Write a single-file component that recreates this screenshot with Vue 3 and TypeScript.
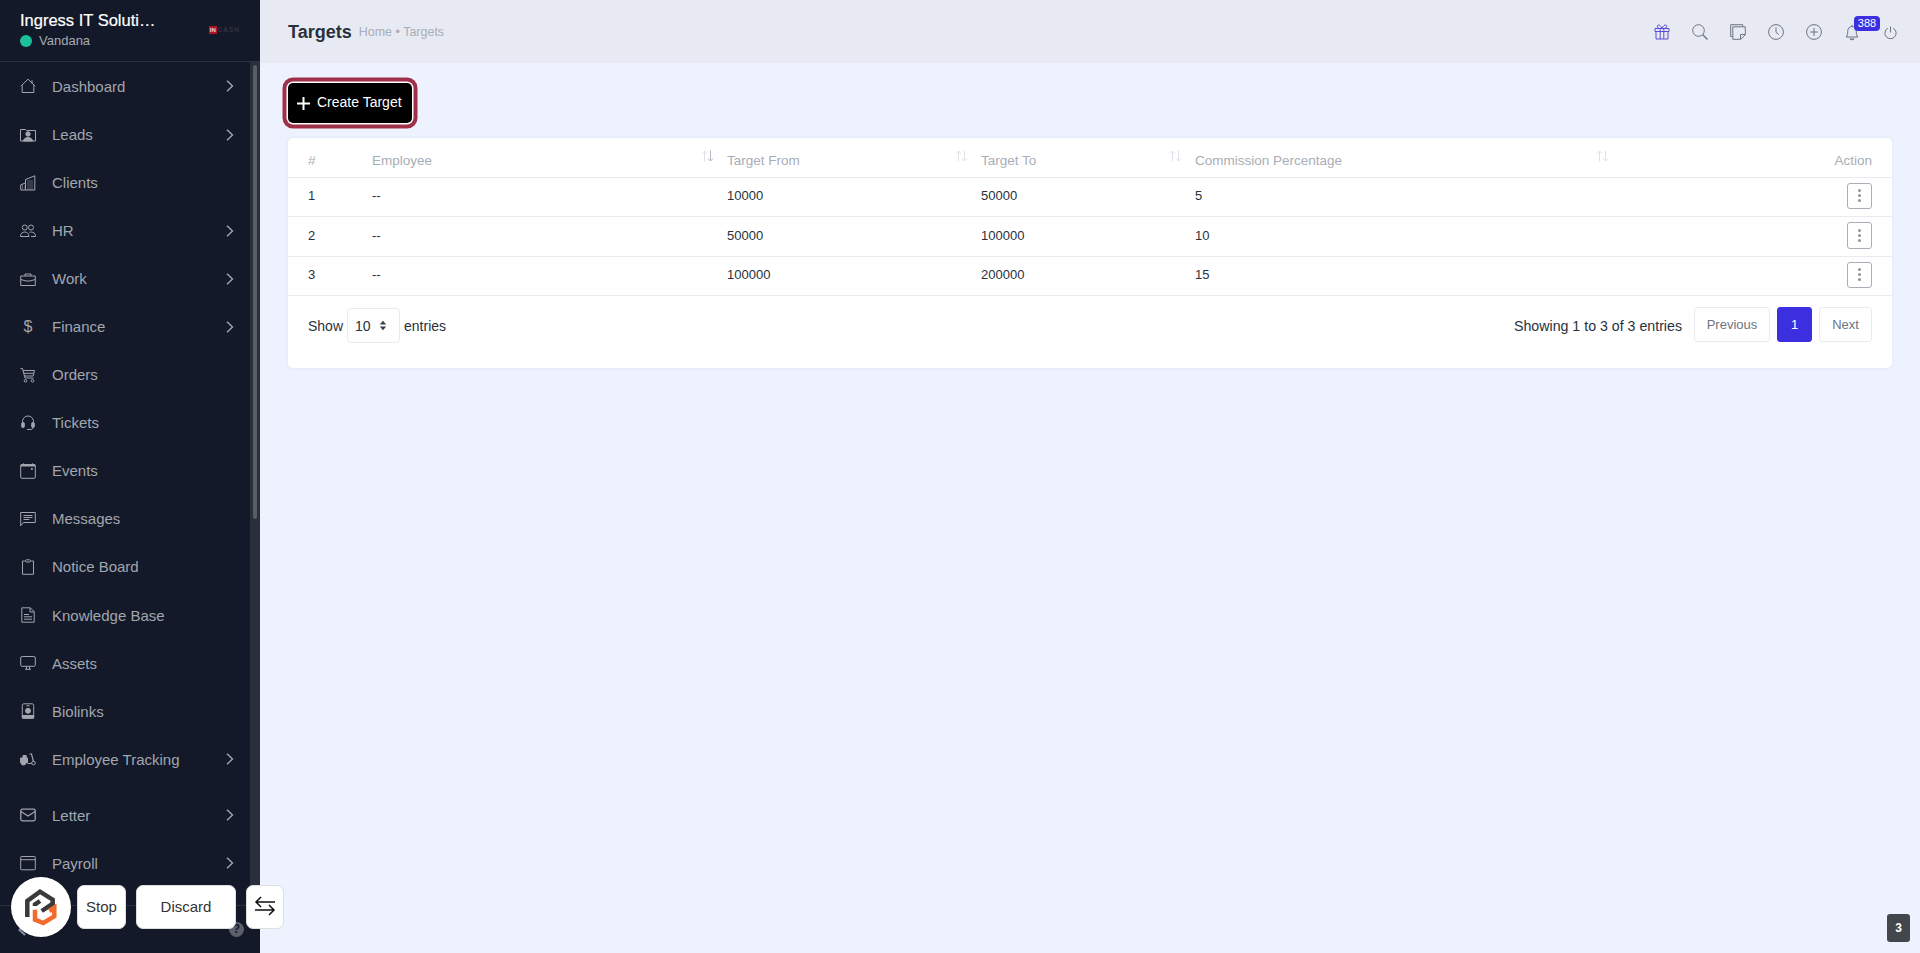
<script setup lang="ts">
interface NavItem { label: string; icon: string; arrow?: boolean; gap?: boolean }
const nav: NavItem[] = [
  { label: 'Dashboard', icon: 'house', arrow: true },
  { label: 'Leads', icon: 'lead', arrow: true },
  { label: 'Clients', icon: 'building' },
  { label: 'HR', icon: 'people', arrow: true },
  { label: 'Work', icon: 'brief', arrow: true },
  { label: 'Finance', icon: 'dollar', arrow: true },
  { label: 'Orders', icon: 'cart' },
  { label: 'Tickets', icon: 'headset' },
  { label: 'Events', icon: 'cal' },
  { label: 'Messages', icon: 'chat' },
  { label: 'Notice Board', icon: 'clip' },
  { label: 'Knowledge Base', icon: 'file' },
  { label: 'Assets', icon: 'display' },
  { label: 'Biolinks', icon: 'badge' },
  { label: 'Employee Tracking', icon: 'scooter', arrow: true },
  { label: 'Letter', icon: 'mail', arrow: true, gap: true },
  { label: 'Payroll', icon: 'window', arrow: true }
]
const rows = [
  { id: 1, from: '10000', to: '50000', pct: '5' },
  { id: 2, from: '50000', to: '100000', pct: '10' },
  { id: 3, from: '100000', to: '200000', pct: '15' }
]
const cols = [
  { label: 'Employee', cls: 'c-emp' },
  { label: 'Target From', cls: 'c-from' },
  { label: 'Target To', cls: 'c-to' },
  { label: 'Commission Percentage', cls: 'c-pct' }
]
</script>

<template>
  <div class="app">
    <aside class="side">
      <div class="brand">
        <div class="brand-text">
          <div class="company">Ingress IT Soluti…</div>
          <div class="user"><span class="dot"></span>Vandana</div>
        </div>
        <div class="mini-logo"><span class="mini-in">IN</span><span class="mini-cash">CASH</span></div>
      </div>
      <div class="side-body">
        <nav class="nav">
          <a v-for="item in nav" :key="item.label" class="nav-item" :class="{ gap: item.gap }">
            <span class="nav-icon">
              <span v-if="item.icon === 'dollar'" class="dollar">$</span>
              <svg v-else viewBox="0 0 16 16" width="16" height="16" fill="none" stroke="currentColor" stroke-width="1">
                <template v-if="item.icon === 'house'"><path d="M.8 8.200 8 1.200l7.200 7M2.200 7.200v7.300h11.600V7.200M12 2.200v3.200" /></template>
                <template v-else-if="item.icon === 'lead'"><path d="M.5 14V2.500h5l1 1h9V14z" /><circle cx="8" cy="7" r="2.200" fill="currentColor" /><path d="M3.500 14c.4-2.600 2.200-3.400 4.500-3.400s4.100.8 4.500 3.400z" fill="currentColor" /></template>
                <template v-else-if="item.icon === 'building'"><path d="M.7 15V9.800l4.800-1.800V4.500L14.800.8V15zM5.500 8V15" /><path d="M2 11h2.500M2 13h2.500M7.500 6h5.500M7.500 8h5.500M7.500 10h5.500M7.500 12h5.500M7.500 14h5.500" stroke-dasharray="1 1" /></template>
                <template v-else-if="item.icon === 'people'"><circle cx="4.800" cy="4.500" r="2.500" /><circle cx="11" cy="4.500" r="2.500" /><path d="M.5 13.500c0-3 1.800-4.500 4.300-4.500 2 0 4 1.500 4.200 4.500zM9.500 9.500c.5-.4 1-.5 1.700-.5 2.500 0 4.300 1.500 4.300 4.500H11" /></template>
                <template v-else-if="item.icon === 'brief'"><path d="M.7 5h14.600v9.500H.7zM5 5V3h6v2M.7 8.500 6 10h4l5.300-1.500" /></template>
                <template v-else-if="item.icon === 'cart'"><path d="M.5 1.500h2L5 11h8.500M3 3.500h11.500l-1.300 5.500H4.400M4 6.300h10" /><circle cx="5.500" cy="13.800" r="1.300" /><circle cx="12.500" cy="13.800" r="1.300" /></template>
                <template v-else-if="item.icon === 'headset'"><path d="M2.500 9V6.500a5.500 5.500 0 0 1 11 0V9" /><rect x="1.700" y="7.500" width="2.600" height="5" rx="1" fill="currentColor" /><rect x="11.700" y="7.500" width="2.600" height="5" rx="1" fill="currentColor" /><path d="M13 12.500c0 1.500-1.500 2-3 2H7" /></template>
                <template v-else-if="item.icon === 'cal'"><rect x=".7" y="1.500" width="14.600" height="13.800" rx="1.200" /><path d="M.7 2.500h14.600" stroke-width="2" /><rect x="11" y="5" width="1.800" height="1.800" fill="currentColor" stroke="none" /><path d="M3.500.3v1.500M12.500.3v1.500" /></template>
                <template v-else-if="item.icon === 'chat'"><path d="M.7 1.500h14.600v10H3.500L.7 14.800z" /><path d="M3.500 4.500h9M3.500 6.500h9M3.500 8.500h6" /></template>
                <template v-else-if="item.icon === 'clip'"><path d="M4.800 2H2.500v13.300h11V2H11.200" /><rect x="5.500" y=".8" width="5" height="2.200" rx="1" /></template>
                <template v-else-if="item.icon === 'file'"><path d="M1.800.8h8.500l3.900 3.900v10.500H1.800zM10 .8V5h4.200" /><path d="M4 7.500h5M4 9.800h8M4 12.200h8" /></template>
                <template v-else-if="item.icon === 'display'"><rect x=".7" y="1.500" width="14.600" height="9.800" rx="1.500" /><path d="M5 14.300h6M6.500 11.500v2.800M9.500 11.500v2.800" /></template>
                <template v-else-if="item.icon === 'badge'"><rect x="2.300" y=".8" width="11.400" height="14.400" rx="1.500" /><path d="M6.500 2.800h3" /><circle cx="8" cy="7.800" r="2.500" fill="currentColor" /><path d="M2.300 12.500h11.400v2.700H2.300z" fill="currentColor" /></template>
                <template v-else-if="item.icon === 'scooter'"><circle cx="3.500" cy="11.500" r="2.500" fill="currentColor" /><circle cx="13.500" cy="12" r="1.800" /><path d="M.3 7h7.200v4.500H.3z" fill="currentColor" /><path d="M3 4.500h3.200v2.500H3z" fill="currentColor" /><path d="M9.500 3h2l2 7.500M7.500 12.500h4.200" stroke-width="1.200" /></template>
                <template v-else-if="item.icon === 'mail'"><rect x=".8" y="2.200" width="14.400" height="11.600" rx="1.500" stroke-width="1.300" /><path d="M1 4.500 8 9l7-4.500" stroke-width="1.300" /></template>
                <template v-else><rect x=".7" y="1.500" width="14.600" height="13.300" rx=".8" /><path d="M.7 4.700h14.600" /></template>
              </svg>
            </span>
            <span class="nav-label">{{ item.label }}</span>
            <svg v-if="item.arrow" class="chev" viewBox="0 0 8 12" width="8" height="12" fill="none" stroke="currentColor" stroke-width="1.400"><path d="M1 .8 6.500 6 1 11.200" /></svg>
          </a>
        </nav>
        <div class="track"><div class="thumb"></div></div>
      </div>
      <div class="side-foot">
        <svg class="back" viewBox="0 0 8 12" width="8" height="12" fill="none" stroke="currentColor" stroke-width="2"><path d="M7 1 1.500 6 7 11" /></svg>
        <span class="help">?</span>
      </div>
    </aside>

    <div class="main">
      <header class="top">
        <div class="crumbs">
          <h1 class="title">Targets</h1>
          <span class="path">Home • Targets</span>
        </div>
        <div class="top-icons">
          <svg class="ti gift" viewBox="0 0 16 16" fill="none" stroke="currentColor"><path d="M1 4.500h14v3H1zM2 7.500V15h12V7.500M6.200 4.500V15M9.800 4.500V15" /><path d="M8 4.500C6.500 1.500 5.500 1 4.500 1 3 1 2.800 3.800 5 4.500M8 4.500C9.500 1.500 10.500 1 11.500 1 13 1 13.200 3.800 11 4.500" /></svg>
          <svg class="ti" viewBox="0 0 16 16" fill="none" stroke="currentColor"><circle cx="6.500" cy="6.500" r="5.800" /><path d="m10.800 10.800 4.700 4.700" stroke-width="1.500" /></svg>
          <svg class="ti" viewBox="0 0 16 16" fill="none" stroke="currentColor"><path d="M2.500 12.500H.7V.7h12v1.800" /><path d="M2.800 2.800h12.500v8l-4.500 4.500h-8zM15 10.500h-4.500V15" /></svg>
          <svg class="ti" viewBox="0 0 16 16" fill="none" stroke="currentColor"><circle cx="8" cy="8" r="7.400" /><path d="M8 3.500V8.300l2.800 2.200" /></svg>
          <svg class="ti" viewBox="0 0 16 16" fill="none" stroke="currentColor"><circle cx="8" cy="8" r="7.400" /><path d="M8 4v8M4 8h8" /></svg>
          <div class="bell-wrap">
            <svg class="ti" viewBox="0 0 16 16" fill="none" stroke="currentColor"><path d="M2 13c1.200-1.300 1.700-2 1.700-5.500 0-3 1.800-5 4.300-5s4.300 2 4.300 5c0 3.500.5 4.200 1.700 5.500zM8 .8v1.700" /><path d="M6 14.500a2 1.300 0 0 0 4 0" fill="currentColor" /></svg>
            <span class="badge">388</span>
          </div>
          <svg class="ti power" viewBox="0 0 13 13" fill="none" stroke="currentColor"><path d="M6.500 .5v6M3.800 2.200a5.600 5.600 0 1 0 5.400 0" /></svg>
        </div>
      </header>

      <main class="content">
        <button class="create">
          <svg class="plus" viewBox="0 0 13 13" width="13" height="13" fill="none" stroke="#fff" stroke-width="2"><path d="M6.500 0v13M0 6.500h13" /></svg>
          Create Target
        </button>
        <section class="card">
          <table class="tbl">
            <thead>
              <tr>
                <th class="c-id">#</th>
                <th v-for="c in cols" :key="c.label" :class="c.cls">
                  {{ c.label }}
                  <svg class="sort" viewBox="0 0 13 12" width="13" height="12" fill="none">
                    <path class="up" d="M3.500 11.500V1M1 3.500 3.500 1 6 3.500" />
                    <path class="down" d="M9.500 .5V11M7 8.500 9.500 11 12 8.500" />
                  </svg>
                </th>
                <th class="c-act">Action</th>
              </tr>
            </thead>
            <tbody>
              <tr v-for="r in rows" :key="r.id">
                <td class="c-id">{{ r.id }}</td>
                <td>--</td>
                <td>{{ r.from }}</td>
                <td>{{ r.to }}</td>
                <td>{{ r.pct }}</td>
                <td class="c-act"><span class="more"><em></em><em></em><em></em></span></td>
              </tr>
            </tbody>
          </table>
          <div class="tfoot">
            <div class="len">
              Show
              <span class="sel">10
                <svg viewBox="0 0 8 12" width="8" height="11" fill="#3a3f4a"><path d="M4 .8 7.500 4.800H.5zM4 11.200.5 7.200h7z" /></svg>
              </span>
              entries
            </div>
            <div class="pager">
              <span class="info">Showing 1 to 3 of 3 entries</span>
              <span class="pg prev">Previous</span>
              <span class="pg cur">1</span>
              <span class="pg next">Next</span>
            </div>
          </div>
        </section>
      </main>
    </div>

    <div class="recorder">
      <div class="rec-logo">
        <svg viewBox="0 0 40 40" width="40" height="40" fill="none" stroke-width="4.500">
          <path d="M6.300 30V14L19 4.700l12.700 8v4L20.700 24" stroke="#3a3a3c" />
          <path d="M14 19v-1.500l5-3.500" stroke="#3a3a3c" />
          <path d="M14 22.700v10l8.300 3.300 11-6.700v-8.600l-5 3.300" stroke="#f26a2e" />
        </svg>
      </div>
      <button class="rec-btn stop">Stop</button>
      <button class="rec-btn discard">Discard</button>
      <button class="rec-btn swap">
        <svg viewBox="0 0 24 24" width="24" height="24" fill="none" stroke="#111" stroke-width="1.500"><path d="M22 8H3M8 3 3 8l5 5M2 16h19M16 11l5 5-5 5" /></svg>
      </button>
    </div>
    <div class="counter">3</div>
  </div>
</template>

<style scoped>
.app {
  position: relative;
  display: flex;
  width: 1920px;
  height: 953px;
  overflow: hidden;
  opacity: .999;
  background: #eef2fe;
  font-family: "Liberation Sans", Arial, sans-serif;
  color: #28313c;
}
.side {
  width: 260px;
  flex: none;
  display: flex;
  flex-direction: column;
  background: #131929;
  color: #a2a6ae;
}
.brand {
  height: 62px;
  flex: none;
  box-sizing: border-box;
  border-bottom: 1px solid #2a303e;
  padding: 11px 20px 0;
  display: flex;
  justify-content: space-between;
}
.company { color: #fff; font-size: 16.500px; line-height: 18px; -webkit-text-stroke: .2px #fff; }
.user { display: flex; align-items: center; margin-top: 4px; font-size: 13px; line-height: 16px; color: #a6aab2; }
.dot { width: 12px; height: 12px; border-radius: 50%; background: #1cc09a; margin-right: 7px; }
.mini-logo { display: flex; align-items: center; margin: 14px 0 0; height: 9px; width: 31px; }
.mini-in { width: 8px; height: 8px; background: #b0141f; color: #f4d0d0; font-size: 6px; font-weight: 700; line-height: 8px; text-align: center; }
.mini-cash { color: #33333f; font-size: 6.500px; font-weight: 700; letter-spacing: 1px; margin-left: 1px; }
.side-body { flex: 1; min-height: 0; display: flex; overflow: hidden; }
.nav { flex: 1; min-width: 0; padding-top: .47px; }
.nav-item { display: flex; align-items: center; height: 48.060px; padding: 0 16px 0 20px; font-size: 15px; }
.nav-item.gap { margin-top: 8px; }
.nav-icon { width: 16px; height: 16px; margin-right: 16px; display: flex; justify-content: center; align-items: center; }
.dollar { font-size: 16px; }
.nav-label { flex: 1; }
.chev { color: #a2a6ae; }
.track { width: 10px; flex: none; background: #2a303b; padding-top: 3px; }
.thumb { width: 4px; height: 454px; margin-left: 3px; background: #5a5e64; border-radius: 2px; }
.side-foot {
  height: 48px;
  flex: none;
  box-sizing: border-box;
  border-top: 1px solid #2a303e;
  display: flex;
  align-items: center;
  justify-content: space-between;
  padding: 0 16px 0 18px;
}
.back { color: #8b93a5; }
.help {
  width: 15px; height: 15px; border-radius: 50%;
  background: #5b5f69; color: #131929;
  font-size: 12px; font-weight: 700; line-height: 15px; text-align: center;
}
.main { flex: 1; min-width: 0; display: flex; flex-direction: column; }
.top {
  height: 63px;
  flex: none;
  box-sizing: border-box;
  background: #e7eaf3;
  padding: 0 23px 0 28px;
  display: flex;
  align-items: center;
  justify-content: space-between;
}
.crumbs { display: flex; align-items: center; }
.title { margin: 0; padding-top: 1px; font-size: 18px; font-weight: 700; color: #28313c; }
.path { margin-left: 7px; font-size: 12.500px; color: #a9adb6; }
.top-icons { display: flex; align-items: center; gap: 22px; color: #6e7480; }
.ti { width: 16px; height: 16px; display: block; overflow: visible; stroke-width: 1; }
.gift { color: #5a4bd8; }
.power { width: 13px; height: 13px; margin-left: 2px; margin-top: 2px; stroke-width: 1; }
.bell-wrap { position: relative; }
.badge {
  position: absolute;
  left: 10px; top: -8px;
  width: 26px; height: 15px;
  border-radius: 4px;
  background: #3b2fe0;
  color: #fff;
  font-size: 11px; line-height: 15px; text-align: center;
}
.content { padding: 20px 28px 0; }
.create {
  display: flex;
  align-items: center;
  height: 40px;
  width: 124px;
  padding: 0 0 2px 9px;
  border: 0;
  border-radius: 5px;
  background: #000;
  color: #fff;
  font: 14px "Liberation Sans", Arial, sans-serif;
  box-shadow: 0 0 0 1.500px #fff, 0 0 0 5.500px #9e3149;
}
.plus { margin: 2px 7px 0 0; }
.card {
  margin-top: 15px;
  background: #fff;
  border-radius: 5px;
  height: 230px;
  box-shadow: 0 0 3px rgba(160, 170, 190, .25);
}
.tbl { width: 100%; border-collapse: collapse; table-layout: fixed; font-size: 13px; }
.tbl th {
  position: relative;
  height: 39px;
  box-sizing: border-box;
  padding: 6px 0 0;
  text-align: left;
  font-size: 13.500px;
  font-weight: 400;
  color: #a9adb6;
  border-bottom: 1px solid #e8ebef;
}
.tbl td { height: 39.500px; box-sizing: border-box; padding: 0 0 2px; color: #28313c; border-bottom: 1px solid #e8ebef; }
.c-id { width: 84px; padding-left: 20px !important; }
.c-emp { width: 355px; }
.c-from { width: 254px; }
.c-to { width: 214px; }
.c-pct { width: 427px; }
.tbl .c-act { text-align: right; padding-right: 20px !important; }
.sort { position: absolute; top: 12px; right: 13px; stroke-width: 1; }
.sort .up { stroke: #dfe1e6; }
.sort .down { stroke: #dfe1e6; }
.c-emp .sort .down { stroke: #b4b7be; }
.more {
  display: inline-flex;
  flex-direction: column;
  align-items: center;
  justify-content: center;
  gap: 2px;
  box-sizing: border-box;
  width: 25px; height: 26.500px;
  border: 1px solid #a9adb6;
  border-radius: 3px;
  vertical-align: middle;
}
.more em { width: 3px; height: 3px; border-radius: 50%; background: #8f939b; }
.tfoot {
  display: flex;
  justify-content: space-between;
  padding: 11px 20px 0;
  font-size: 14px;
}
.len { display: flex; align-items: center; height: 33px; margin-top: 2px; gap: 4px; }
.sel {
  box-sizing: border-box;
  display: flex;
  align-items: center;
  justify-content: space-between;
  width: 53px; height: 35px;
  padding: 0 12px 0 7px;
  border: 1px solid #e8ebef;
  border-radius: 4px;
  font-size: 14px;
}
.pager { display: flex; align-items: center; height: 35px; }
.info { margin-right: 12px; padding-top: 2px; font-size: 14.200px; }
.pg {
  box-sizing: border-box;
  height: 35px;
  line-height: 33px;
  border: 1px solid #e8ebef;
  border-radius: 3px;
  font-size: 13px;
  text-align: center;
  color: #6e7480;
}
.prev { width: 76px; }
.cur { width: 35px; margin: 0 7px; background: #3b2fe0; border-color: #3b2fe0; color: #fff; }
.next { width: 53px; }
.recorder {
  position: absolute;
  left: 11px; top: 877px;
  display: flex;
  align-items: center;
}
.rec-logo {
  width: 60px; height: 60px;
  border-radius: 50%;
  background: #fff;
  display: flex; align-items: center; justify-content: center;
  box-shadow: 0 0 2px rgba(0, 0, 0, .3);
}
.rec-btn {
  height: 44px;
  padding: 0 0 2px;
  border: 1px solid #dedede;
  border-radius: 7px;
  background: #fff;
  color: #333;
  font: 15px "Liberation Sans", Arial, sans-serif;
  display: flex; align-items: center; justify-content: center;
}
.stop { width: 49px; margin-left: 6px; }
.discard { width: 100px; margin-left: 10px; }
.swap { width: 38px; margin-left: 10px; }
.counter {
  position: absolute;
  right: 10px; bottom: 11px;
  width: 23px; height: 28px;
  border-radius: 3px;
  background: #43464b;
  color: #fff;
  font-size: 12px; font-weight: 700; line-height: 28px; text-align: center;
}
</style>
